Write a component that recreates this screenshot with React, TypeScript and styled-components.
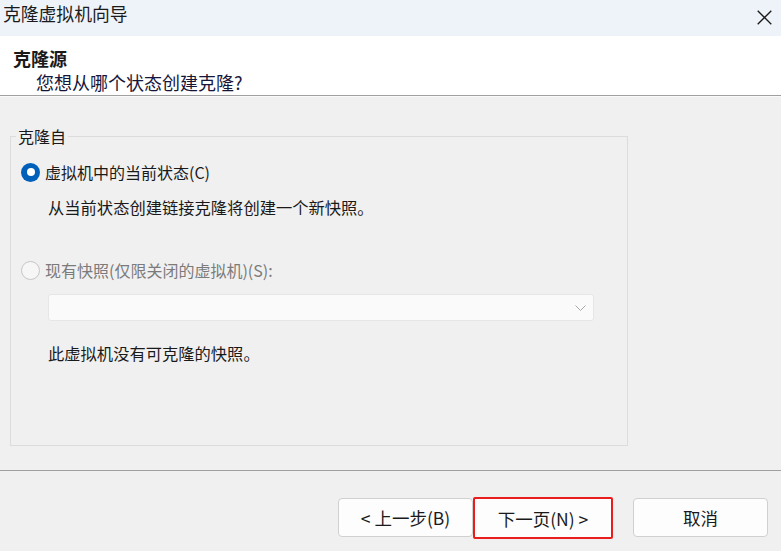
import * as React from "react";
import styled, { createGlobalStyle } from "styled-components";

const GlobalStyle = createGlobalStyle`
    html, body {
        margin: 0;
        padding: 0;
        background: #f0f0f0;
    }

    body {
        font-family: "Noto Sans CJK SC", "Noto Sans", sans-serif;
        color: #1a1a1a;
    }
`;

const Window = styled.div`
    display: flex;
    flex-direction: column;
    width: 781px;
    height: 551px;
    overflow: hidden;
    background: #f0f0f0;
`;

const TitleBar = styled.div`
    display: flex;
    align-items: flex-start;
    justify-content: space-between;
    box-sizing: border-box;
    height: 36px;
    padding: 0 9px 0 3px;
    background: #eef2f9;
`;

const Title = styled.div`
    font-size: 17.8px;
    line-height: 26px;
    color: #1b1b1b;
`;

const Close = styled.div`
    width: 15px;
    height: 15px;
    margin-top: 6px;
`;

const Header = styled.div`
    box-sizing: border-box;
    height: 60px;
    padding: 10px 13px 0;
    background: #fff;
    border-bottom: 1px solid #a0a0a0;
    box-shadow: 0 1px 0 #fafafa;
`;

const HeaderTitle = styled.div`
    font-size: 18px;
    font-weight: bold;
    line-height: 24px;
`;

const HeaderSub = styled.div`
    margin-left: 23px;
    font-size: 18px;
    line-height: 24px;
    color: #16163a;
`;

const Body = styled.div`
    box-sizing: border-box;
    height: 375px;
    padding: 29px 0 0 10px;
    border-bottom: 1px solid #a0a0a0;
`;

const Group = styled.fieldset`
    box-sizing: border-box;
    width: 618px;
    height: 321px;
    margin: 0;
    padding: 13px 10px 0;
    border: 1px solid #dcdcdc;
    min-inline-size: 0;
`;

const Legend = styled.legend`
    margin-left: -5px;
    padding: 0 2px;
    font-size: 16px;
    line-height: 22px;
    color: #1a1a1a;
`;

const RadioRow = styled.label<{ $disabled?: boolean }>`
    display: flex;
    align-items: center;
    height: 24px;
    font-size: 16px;
    color: ${(p) => (p.$disabled ? "#7b7b7b" : "#1a1a1a")};
`;

const RadioDot = styled.span<{ $checked?: boolean }>`
    box-sizing: border-box;
    display: flex;
    align-items: center;
    justify-content: center;
    width: 19px;
    height: 19px;
    margin-right: 5px;
    border-radius: 50%;
    background: ${(p) => (p.$checked ? "#005fb8" : "#f6f6f6")};
    border: ${(p) => (p.$checked ? "none" : "1px solid #c6c6c6")};

    &::after {
        content: "";
        display: ${(p) => (p.$checked ? "block" : "none")};
        width: 8px;
        height: 8px;
        border-radius: 50%;
        background: #fff;
    }
`;

const Note = styled.div<{ $top: number }>`
    margin: ${(p) => p.$top}px 0 0 27px;
    font-size: 16.3px;
    line-height: 24px;
`;

const Combo = styled.div`
    box-sizing: border-box;
    display: flex;
    align-items: center;
    justify-content: flex-end;
    width: 546px;
    height: 27px;
    margin: 12px 0 0 27px;
    padding-right: 7px;
    background: #fafafa;
    border: 1px solid #e6e6e6;
    border-radius: 3px;
`;

const Footer = styled.div`
    display: flex;
    flex: 1;
    align-items: flex-start;
    justify-content: flex-end;
    padding: 27px 13px 0 0;
`;

const Button = styled.button<{ $width: number; $focused?: boolean }>`
    box-sizing: border-box;
    width: ${(p) => p.$width}px;
    height: ${(p) => (p.$focused ? 42 : 39)}px;
    margin: ${(p) => (p.$focused ? "-1px 20px 0 0" : "0")};
    padding: 0;
    background: #fdfdfd;
    border: ${(p) => (p.$focused ? "2px solid #ea1c1c" : "1px solid #d0d0d0")};
    border-radius: ${(p) => (p.$focused ? 2 : 4)}px;
    font-family: inherit;
    font-size: 17.5px;
    color: #1a1a1a;
`;

export default function App() {
    return (
        <>
            <GlobalStyle />
            <Window>
                <TitleBar>
                    <Title>克隆虚拟机向导</Title>
                    <Close>
                        <svg width="15" height="15" viewBox="0 0 15 15">
                            <path d="M0.7 0.7 L14.3 14.3 M14.3 0.7 L0.7 14.3" stroke="#1a1a1a" strokeWidth="1.3" />
                        </svg>
                    </Close>
                </TitleBar>
                <Header>
                    <HeaderTitle>克隆源</HeaderTitle>
                    <HeaderSub>您想从哪个状态创建克隆?</HeaderSub>
                </Header>
                <Body>
                    <Group>
                        <Legend>克隆自</Legend>
                        <RadioRow>
                            <RadioDot $checked />
                            虚拟机中的当前状态(C)
                        </RadioRow>
                        <Note $top={11}>从当前状态创建链接克隆将创建一个新快照。</Note>
                        <RadioRow $disabled style={{ marginTop: 39 }}>
                            <RadioDot />
                            现有快照(仅限关闭的虚拟机)(S):
                        </RadioRow>
                        <Combo>
                            <svg width="11" height="6" viewBox="0 0 11 6">
                                <path d="M0.5 0.5 L5.5 5.5 L10.5 0.5" stroke="#a8a8a8" strokeWidth="1" fill="none" />
                            </svg>
                        </Combo>
                        <Note $top={20}>此虚拟机没有可克隆的快照。</Note>
                    </Group>
                </Body>
                <Footer>
                    <Button $width={135}>&lt; 上一步(B)</Button>
                    <Button $width={140} $focused>下一页(N) &gt;</Button>
                    <Button $width={135}>取消</Button>
                </Footer>
            </Window>
        </>
    );
}
